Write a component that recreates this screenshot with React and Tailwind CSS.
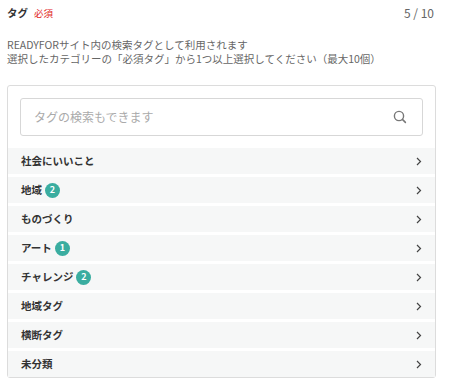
import React from "react";

const categories = [
  { name: "社会にいいこと", count: 0 },
  { name: "地域", count: 2 },
  { name: "ものづくり", count: 0 },
  { name: "アート", count: 1 },
  { name: "チャレンジ", count: 2 },
  { name: "地域タグ", count: 0 },
  { name: "横断タグ", count: 0 },
  { name: "未分類", count: 0 },
];

function Chevron() {
  return (
    <svg width="6" height="9" viewBox="0 0 6 9" fill="none">
      <path d="M1 1l3.5 3.5L1 8" stroke="#444" strokeWidth="1.2" />
    </svg>
  );
}

function SearchIcon() {
  return (
    <svg width="14" height="14" viewBox="0 0 14 14" fill="none">
      <circle cx="6" cy="6" r="4.6" stroke="#777" strokeWidth="1.4" />
      <path d="M9.4 9.4l3 3" stroke="#777" strokeWidth="1.5" strokeLinecap="round" />
    </svg>
  );
}

function App() {
  return (
    <div
      className="w-[461px] h-[392px] bg-white pl-[7px] pr-[26px] pt-[6px]"
      style={{ fontFamily: '"Noto Sans CJK JP", "Noto Sans", sans-serif' }}
    >
      <div className="flex items-center justify-between h-[14px]">
        <div className="flex items-center gap-[6px]">
          <span className="text-[10.5px] font-bold text-[#333]">タグ</span>
          <span className="text-[9.5px] text-[#e0241b]">必須</span>
        </div>
        <span className="text-[12px] text-[#666] mr-[1px]">5 / 10</span>
      </div>

      <div className="mt-[18px] text-[10.5px] leading-[14px] text-[#666]">
        <p>READYFORサイト内の検索タグとして利用されます</p>
        <p>選択したカテゴリーの「必須タグ」から1つ以上選択してください（最大10個）</p>
      </div>

      <div className="mt-[19px] border border-[#dcdcdc] rounded-[3px] pt-[12px] w-[429px]">
        <div className="px-[12px]">
          <div className="h-[38px] border border-[#d7d7d7] rounded-[3px] flex items-center justify-between pl-[13px] pr-[15px]">
            <span className="text-[12px] text-[#aaa]">タグの検索もできます</span>
            <SearchIcon />
          </div>
        </div>
        <div className="mt-[12px] flex flex-col gap-[3px]">
          {categories.map((c) => (
            <div
              key={c.name}
              className="h-[26px] bg-[#f6f7f7] flex items-center justify-between pl-[13px] pr-[13px]"
            >
              <div className="flex items-center gap-[3px]">
                <span className="text-[10.5px] font-bold text-[#333]">{c.name}</span>
                {c.count > 0 && (
                  <span className="w-[15px] h-[15px] rounded-full bg-[#3aada0] text-white text-[9px] font-bold flex items-center justify-center">
                    {c.count}
                  </span>
                )}
              </div>
              <Chevron />
            </div>
          ))}
        </div>
      </div>
    </div>
  );
}

export default App;
